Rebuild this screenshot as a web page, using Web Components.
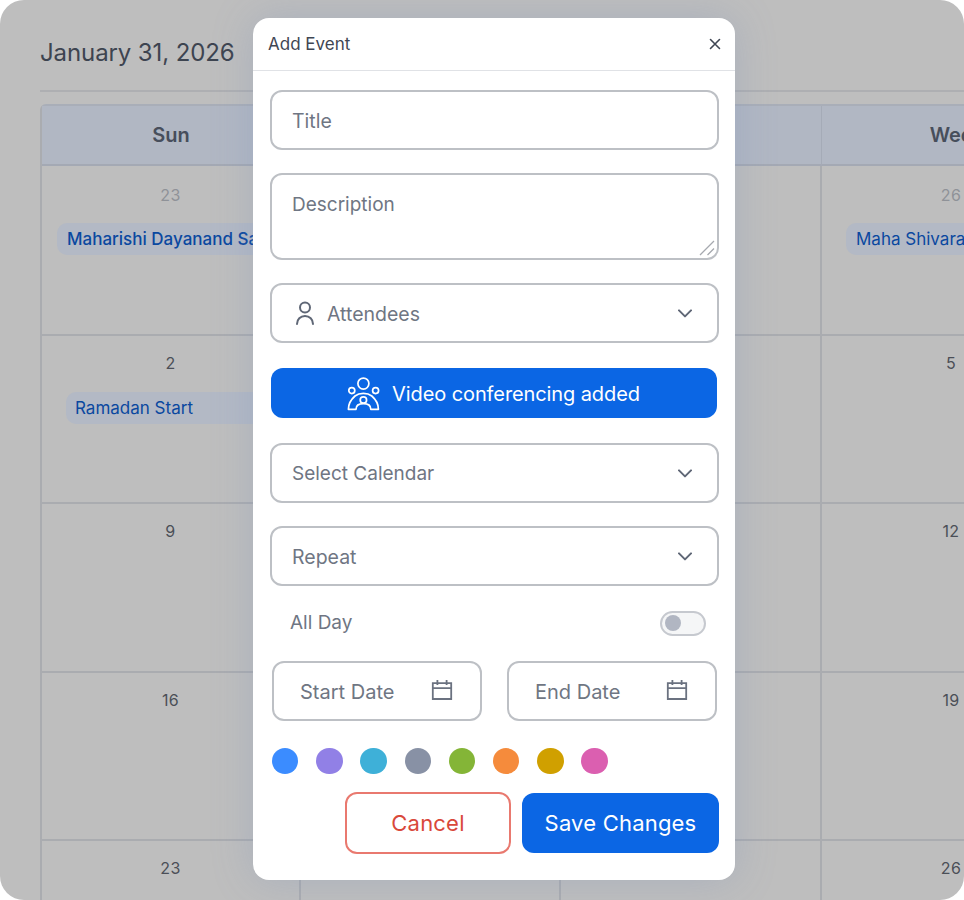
<!DOCTYPE html>
<html lang="en">
<head>
<meta charset="utf-8">
<title>Add Event</title>
<style>
  html, body { margin: 0; padding: 0; background: #fff; }
  body { font-family: Inter, "Liberation Sans", sans-serif; }
</style>
</head>
<body>
<calendar-stage>
  <month-grid></month-grid>
  <event-modal slot="overlay"></event-modal>
</calendar-stage>

<script>
const chevron = `<svg width="14" height="9" viewBox="0 0 14 9" fill="none" stroke="#5f6776" stroke-width="2" stroke-linecap="round" stroke-linejoin="round"><path d="M1 1.4 7 7.4 13 1.4"/></svg>`;
const calendarIcon = `<svg width="22" height="22" viewBox="0 0 22 22" fill="none" stroke="#6b7280" stroke-width="1.8"><path d="M1.8 4.2h18.400v15.800H1.800z"/><path d="M1.800 9.200h18.400M6.400 1v5M15.600 1v5"/></svg>`;
const personIcon = `<svg width="20" height="24" viewBox="0 0 20 24" fill="none" stroke="#5f6776" stroke-width="2" stroke-linecap="round"><circle cx="10" cy="6.400" r="5"/><path d="M2 23c0-4.600 3.400-8 8-8s8 3.400 8 8"/></svg>`;
const confIcon = `<svg width="36" height="36" viewBox="0 0 36 36" fill="none" stroke="#fff" stroke-width="1.700" stroke-linejoin="round" stroke-linecap="round"><circle cx="17.400" cy="7.600" r="5.500"/><circle cx="5.800" cy="14.600" r="3"/><circle cx="29.600" cy="14.600" r="3"/><circle cx="17.400" cy="24" r="3.200"/><path d="M2.400 33.300C2.400 28 5 23.500 9 20c2.200-1.700 5-2.600 8.400-2.600s6.200.9 8.400 2.600c4 3.500 6.600 8 6.600 13.300h-7.600c0-3.800-3.300-5.600-7.400-5.600s-7.400 1.800-7.400 5.600z"/></svg>`;

// outer rounded panel, modal goes over the calendar
class CalendarStage extends HTMLElement {
  constructor() {
    super();
    this.attachShadow({ mode: "open" });
    this.shadowRoot.innerHTML = `
      <style>
        :host {
          display: block;
          position: relative;
          width: 964px;
          height: 900px;
          overflow: hidden;
          box-sizing: border-box;
          padding: 0 0 0 40px;
          background: #bebebe;
          border-radius: 24px;
        }
        h1 {
          margin: 0 0 12px;
          height: 92px;
          box-sizing: border-box;
          padding-top: 38px;
          font: 400 24px/30px Inter, sans-serif;
          letter-spacing: -0.1px;
          color: #3d4450;
          border-bottom: 2px solid #aeafb2;
        }
        ::slotted([slot="overlay"]) {
          position: absolute;
          left: 253px;
          top: 18px;
        }
      </style>
      <h1>January 31, 2026</h1>
      <slot></slot>
      <slot name="overlay"></slot>
    `;
  }
}

class MonthGrid extends HTMLElement {
  constructor() {
    super();
    this.attachShadow({ mode: "open" });
    const days = [
      [["23", 1], ["24", 1], ["25", 1], ["26", 1]],
      [["2"], ["3"], ["4"], ["5"]],
      [["9"], ["10"], ["11"], ["12"]],
      [["16"], ["17"], ["18"], ["19"]],
      [["23"], ["24"], ["25"], ["26"]],
    ];
    const events = {
      "0-0": { text: "Maharishi Dayanand Saraswati Jayanti", left: 15, top: 18, pad: 10, weight: 500 },
      "0-3": { text: "Maha Shivaratri", left: 24, top: 18, pad: 10, weight: 400 },
      "1-0": { text: "Ramadan Start", left: 24, top: 19, pad: 9, weight: 400, wide: true },
    };
    const head = ["Sun", "Mon", "Tue", "Wed"].map((d) => `<div class="head">${d}</div>`).join("");
    const cells = days.map((row, r) => row.map(([num, muted], c) => {
      const ev = events[r + "-" + c];
      const chip = ev
        ? `<div class="chip${ev.wide ? " wide" : ""}" style="margin:${ev.top}px 0 0 ${ev.left}px;padding:0 ${ev.pad}px;font-weight:${ev.weight}">${ev.text}</div>`
        : "";
      return `<div class="cell${r === 0 ? " first" : ""}"><div class="num${muted ? " muted" : ""}">${num}</div>${chip}</div>`;
    }).join("")).join("");
    this.shadowRoot.innerHTML = `
      <style>
        :host {
          display: grid;
          grid-template-columns: 259px 260px 261px 260px;
          grid-template-rows: 60px 170px repeat(4, 168.3px);
          width: 1042px;
          border-left: 2px solid #aaacb0;
          border-top: 2px solid #a9aeb8;
          border-top-left-radius: 6px;
        }
        .head {
          display: flex;
          align-items: center;
          justify-content: center;
          background: #b1b7c3;
          border-right: 1px solid #a5abb7;
          border-bottom: 2px solid #a4a9b4;
          font: 600 20px/24px Inter, sans-serif;
          color: #474e5b;
        }
        .cell {
          box-sizing: border-box;
          border-right: 2px solid #aaacb0;
          border-bottom: 2px solid #aaacb0;
          padding-top: 17px;
          min-width: 0;
        }
        .cell.first { padding-top: 19px; }
        .num {
          text-align: center;
          font: 400 16px/20px Inter, sans-serif;
          letter-spacing: 0.4px;
          color: #4b4f57;
        }
        .num.muted { color: #8f9298; }
        .chip {
          width: max-content;
          height: 32px;
          line-height: 33px;
          font-family: Inter, sans-serif;
          font-size: 17px;
          white-space: nowrap;
          color: #0a48a0;
          background: #b3b9c5;
          border-radius: 10px;
        }
        .chip.wide { width: 230px; }
      </style>
      ${head}${cells}
    `;
  }
}

// bordered input look, text is only a placeholder
class FormField extends HTMLElement {
  constructor() {
    super();
    this.attachShadow({ mode: "open" });
    this.shadowRoot.innerHTML = `
      <style>
        :host {
          display: flex;
          align-items: center;
          box-sizing: border-box;
          height: 60px;
          padding: 0 20px;
          gap: 12px;
          background: #fff;
          border: 2px solid #bdc0c5;
          border-radius: 12px;
          font: 400 19px/24px Inter, sans-serif;
          color: #6f7683;
        }
        :host([multiline]) {
          position: relative;
          align-items: flex-start;
          height: 87px;
          padding-top: 16px;
        }
        .text { flex: 1; min-width: 0; white-space: nowrap; padding-top: 2px; }
        .grip { position: absolute; right: 2px; bottom: 2px; }
        ::slotted(span) { display: flex; flex: none; }
      </style>
      <slot name="lead"></slot>
      <span class="text"><slot></slot></span>
      <slot name="trail"></slot>
      ${this.hasAttribute("multiline") ? `<svg class="grip" width="16" height="16" viewBox="0 0 16 16" fill="none" stroke="#a6a9af" stroke-width="1.300"><path d="M1 15 15 1M8.500 15 15 8.500"/></svg>` : ""}
    `;
  }
}

class ToggleRow extends HTMLElement {
  constructor() {
    super();
    this.attachShadow({ mode: "open" });
    this.shadowRoot.innerHTML = `
      <style>
        :host {
          display: flex;
          align-items: center;
          justify-content: space-between;
          height: 26px;
          padding: 0 13px 0 20px;
          font: 400 19px/24px Inter, sans-serif;
          color: #6f7683;
        }
        .track {
          box-sizing: border-box;
          display: flex;
          align-items: center;
          width: 46px;
          height: 25px;
          padding-left: 3px;
          background: #f5f6f7;
          border: 2px solid #c6c9cf;
          border-radius: 13px;
        }
        .knob { width: 16px; height: 16px; border-radius: 50%; background: #b1b6c2; }
      </style>
      <slot></slot>
      <div class="track"><div class="knob"></div></div>
    `;
  }
}

class ColorDots extends HTMLElement {
  constructor() {
    super();
    this.attachShadow({ mode: "open" });
    const colors = ["#3b8cff", "#9180e6", "#3eb0d8", "#8891a5", "#84b537", "#f58b3c", "#d0a000", "#db5fb0"];
    this.shadowRoot.innerHTML = `
      <style>
        :host { display: flex; gap: 17.800px; padding-left: 2px; }
        i { width: 26.400px; height: 26.400px; border-radius: 50%; }
      </style>
      ${colors.map((c) => `<i style="background:${c}"></i>`).join("")}
    `;
  }
}

class ActionButton extends HTMLElement {
  constructor() {
    super();
    this.attachShadow({ mode: "open" });
    this.shadowRoot.innerHTML = `
      <style>
        :host {
          display: flex;
          align-items: center;
          justify-content: center;
          gap: 10px;
          box-sizing: border-box;
          border-radius: 12px;
          font: 400 22px/28px Inter, sans-serif;
          letter-spacing: 0.2px;
          background: #0b66e4;
          color: #fff;
          white-space: nowrap;
        }
        :host([outline]) {
          background: #fff;
          color: #d9483b;
          border: 2px solid #e9796f;
        }
        ::slotted(span) { display: flex; flex: none; }
      </style>
      <slot name="icon"></slot>
      <slot></slot>
    `;
  }
}

class EventModal extends HTMLElement {
  constructor() {
    super();
    this.attachShadow({ mode: "open" });
    this.shadowRoot.innerHTML = `
      <style>
        :host {
          display: block;
          box-sizing: border-box;
          width: 482px;
          height: 862px;
          background: #fff;
          border-radius: 16px;
          box-shadow: 0 0 40px rgba(115, 140, 185, 0.28);
          font-family: Inter, sans-serif;
        }
        header {
          display: flex;
          align-items: center;
          justify-content: space-between;
          height: 53px;
          box-sizing: border-box;
          padding: 0 14px 0 15px;
          border-bottom: 1px solid #e0e2e6;
          font: 400 17px/22px Inter, sans-serif;
          color: #3f4653;
        }
        header svg { display: block; }
        .body { display: flex; flex-direction: column; padding: 19px 16px 0 17px; }
        .gap-23 { margin-top: 23px; }
        .big { font-size: 19.500px; }
        .lead { margin: -1px 0.500px 0 2.500px; }
        .chev { margin-right: 5.500px; }
        .video {
          height: 50px;
          margin: 25px 2px 25px 1px;
          font-size: 20px;
          letter-spacing: -0.1px;
          padding: 1px 2px 0 0;
        }
        .dates { display: grid; grid-template-columns: 210px 210px; gap: 25px; margin: 25px 1px 0 2px; height: 60px; }
        .dates form-field { padding: 0 27px 0 26px; font-size: 20px; }
        .dates svg { margin-top: -2px; }
        color-dots { margin-top: 27px; }
        .actions { display: flex; justify-content: flex-end; gap: 11px; margin-top: 18px; }
        .cancel { width: 166px; height: 62px; }
        .save { width: 197px; height: 60px; margin-top: 1px; }
      </style>
      <header>
        <span>Add Event</span>
        <svg width="12" height="12" viewBox="0 0 12 12" fill="none" stroke="#3f4653" stroke-width="1.600" stroke-linecap="round"><path d="M1.500 1.500l9 9M10.500 1.500l-9 9"/></svg>
      </header>
      <div class="body">
        <form-field class="big">Title</form-field>
        <form-field class="gap-23" multiline>Description</form-field>
        <form-field class="gap-23 big">
          <span slot="lead" class="lead">${personIcon}</span>
          Attendees
          <span slot="trail" class="chev">${chevron}</span>
        </form-field>
        <action-button class="video">
          <span slot="icon">${confIcon}</span>
          Video conferencing added
        </action-button>
        <form-field>
          Select Calendar
          <span slot="trail" class="chev">${chevron}</span>
        </form-field>
        <form-field class="gap-23 big">
          Repeat
          <span slot="trail" class="chev">${chevron}</span>
        </form-field>
        <toggle-row style="margin-top:24px">All Day</toggle-row>
        <div class="dates">
          <form-field>Start Date<span slot="trail">${calendarIcon}</span></form-field>
          <form-field>End Date<span slot="trail">${calendarIcon}</span></form-field>
        </div>
        <color-dots></color-dots>
        <div class="actions">
          <action-button class="cancel" outline>Cancel</action-button>
          <action-button class="save">Save Changes</action-button>
        </div>
      </div>
    `;
  }
}

customElements.define("calendar-stage", CalendarStage);
customElements.define("month-grid", MonthGrid);
customElements.define("form-field", FormField);
customElements.define("toggle-row", ToggleRow);
customElements.define("color-dots", ColorDots);
customElements.define("action-button", ActionButton);
customElements.define("event-modal", EventModal);
</script>
</body>
</html>
